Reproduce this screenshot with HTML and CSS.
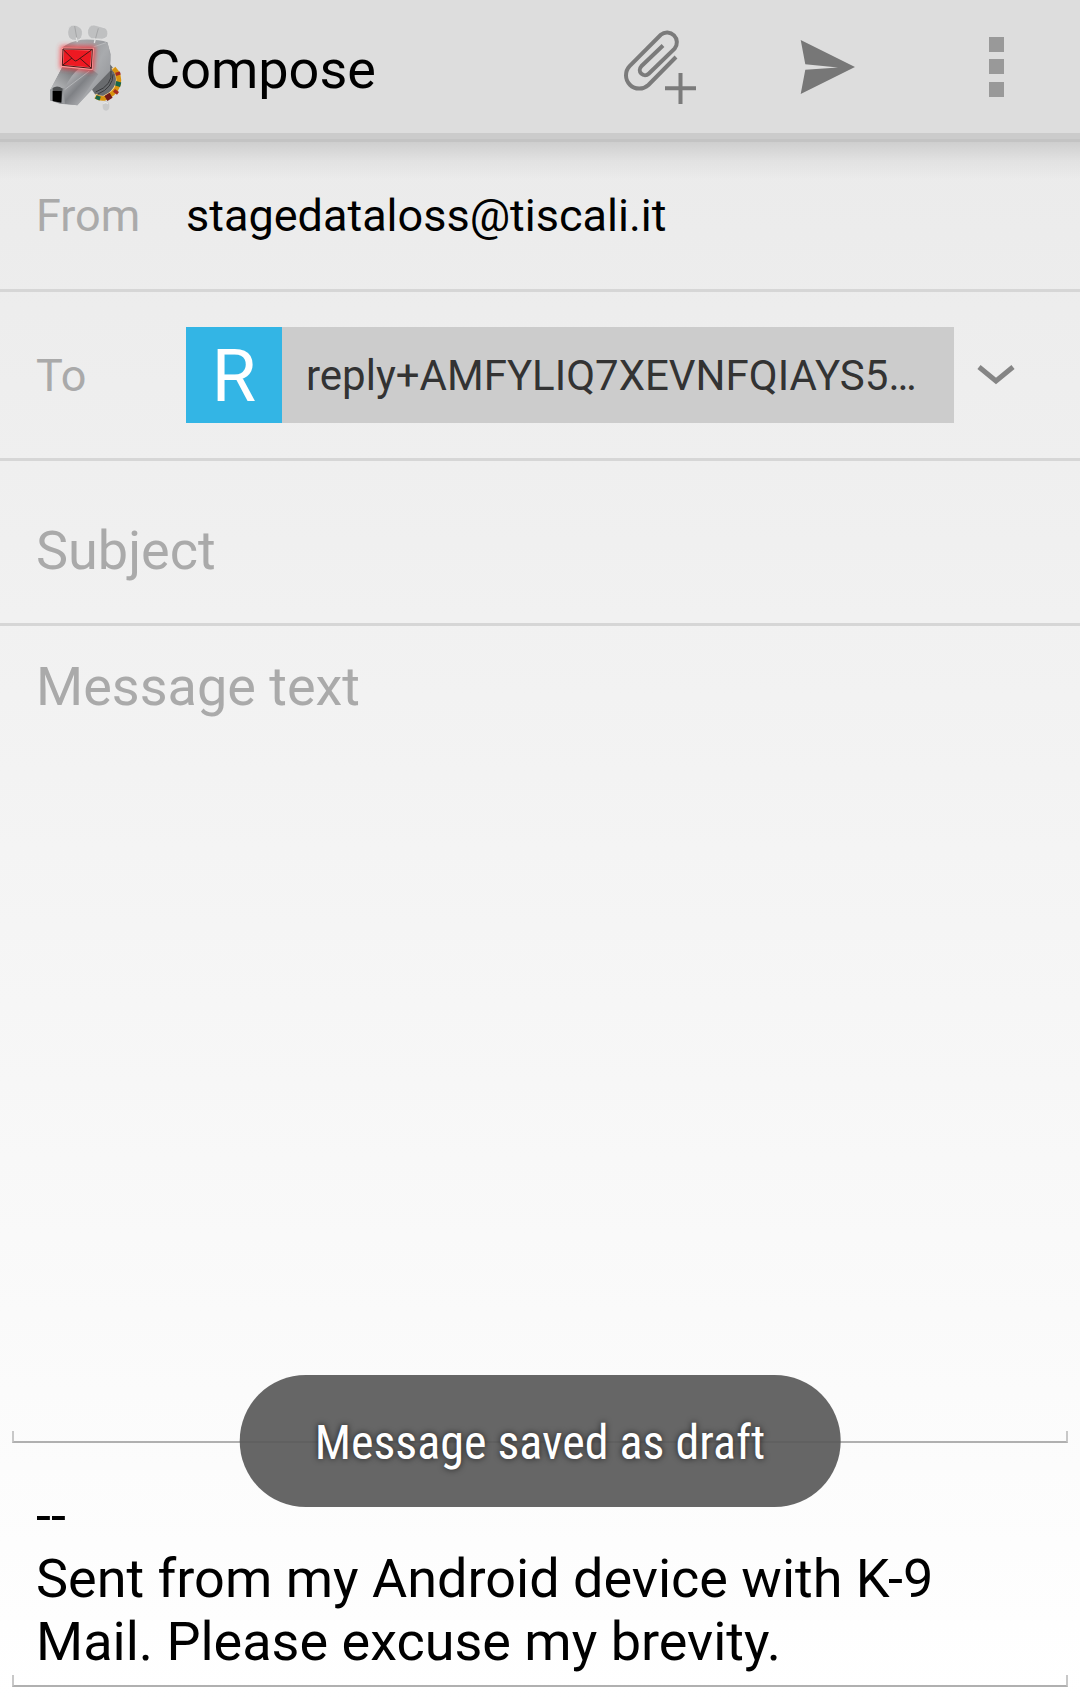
FILE: index.html
```html
<!DOCTYPE html>
<html lang="en">
<head>
<meta charset="utf-8">
<meta name="viewport" content="width=device-width, initial-scale=1">
<title>Compose</title>
<link rel="stylesheet" href="styles.css">
</head>
<body>
<header class="action-bar">
  <svg class="logo" viewBox="0 0 330 330" aria-hidden="true">
    <defs>
      <linearGradient id="side" x1="0" y1="0" x2="1" y2="1">
        <stop offset="0" stop-color="#8b8d90"/><stop offset=".5" stop-color="#a9abae"/><stop offset="1" stop-color="#8b8d91"/>
      </linearGradient>
      <linearGradient id="head" x1="0" y1="0" x2="1" y2="0">
        <stop offset="0" stop-color="#77797d"/><stop offset=".45" stop-color="#a8a9ac"/><stop offset="1" stop-color="#97999d"/>
      </linearGradient>
      <linearGradient id="jaw" x1="0" y1="0" x2="1" y2="1">
        <stop offset=".25" stop-color="#a9aaad"/><stop offset=".48" stop-color="#7f8185"/><stop offset=".8" stop-color="#b5b6b9"/>
      </linearGradient>
      <linearGradient id="snout" x1="1" y1="0" x2="0" y2="1">
        <stop offset=".2" stop-color="#77797c"/><stop offset="1" stop-color="#c2c3c5"/>
      </linearGradient>
      <filter id="glow" x="-40%" y="-40%" width="180%" height="180%"><feGaussianBlur stdDeviation="8"/></filter>
    </defs>
    <ellipse cx="228" cy="285" rx="10" ry="14" fill="#c9cacb"/>
    <path d="M220 278q6-6 14 0" fill="none" stroke="#e8e8e8" stroke-width="4"/>
    <path d="M232 150L250 172Q268 190 260 220Q250 248 222 258L198 254 186 236Z" fill="#696b6e"/>
    <path d="M243 180Q250 222 197 243M249 190Q249 230 204 249" fill="none" stroke="#38393b" stroke-width="3"/>
    <path d="M247 171Q266 190 260 218Q250 246 222 257Q207 259 196 251" fill="none" stroke="#f8d79b" stroke-width="7"/>
    <path d="M251 172Q272 192 265 222Q254 250 224 262Q208 264 197 256" fill="none" stroke="#d8930f" stroke-width="14"/>
    <path d="M257 190L271 186M252 238L264 247" stroke="#a52b20" stroke-width="10"/>
    <path d="M257 217L272 221M206 255L202 266" stroke="#18664a" stroke-width="14"/>
    <path d="M231 250L240 265" stroke="#701b19" stroke-width="18"/>
    <path d="M96 110Q120 91 155 86Q205 84 232 94L242 130Q243 170 230 185L142 283 90 278 60 268 61 238 99 164Z" fill="url(#head)"/>
    <path d="M190 107L232 94Q244 130 240 180L190 232 142 283 130 262 175 200 188 170Z" fill="url(#side)"/>
    <path d="M99 166L187 176 205 190 142 283 104 278 101 238Z" fill="url(#jaw)"/>
    <path d="M99 164L150 170Q123 190 105 230L60 238Z" fill="url(#snout)"/>
    <path d="M104 236L178 180M190 108L228 95" fill="none" stroke="#c4c5c7" stroke-width="2"/>
    <path d="M60 236Q80 220 101 237L104 278 60 268Z" fill="#9a9c9f"/>
    <path d="M68 231Q82 221 98 233L94 274 68 270Z" fill="#4f5153"/>
    <path d="M68 240L95 240 94 275 68 270Z" fill="#000"/>
    <path d="M92 104L196 106 191 182 90 172Z" fill="#ff3037" opacity=".8" filter="url(#glow)"/>
    <path d="M98 113L188 115 184 173 96 165Z" fill="#ed1922" stroke="#ff9a9a" stroke-width="7"/>
    <path d="M99 114L187 115 184 172 97 163ZM99 115L131 147Q137 153 143 147L187 115M97 163L126 141M184 172L150 142" fill="none" stroke="#4a1717" stroke-width="3"/>
    <g fill="#bfc0c1" stroke="#e5e5e5" stroke-width="2">
      <path d="M125 43Q139 39 151 50Q162 60 154 80Q146 91 127 87Q113 83 113 63Q114 47 125 43Z"/>
      <path d="M184 43Q191 40 204 45L226 51Q237 60 232 76Q224 87 209 84L185 83Q170 76 173 57Q176 47 184 43Z"/>
    </g>
    <path d="M134 45L142 91M205 52L193 96" fill="none" stroke="#a5a6a7" stroke-width="3"/>
    <path d="M139 80L142 93M196 82L193 96" stroke="#e4e4e4" stroke-width="4"/>
  </svg>
  <h1 class="title">Compose</h1>
  <div class="actions">
    <button class="action" type="button" aria-label="Add attachment">
      <svg class="action-icon" viewBox="612 18 96 96">
        <path class="clip" d="M676 57L648.4 85A13.3 13.3 0 0 1 629.6 66.2L660.8 34.8A9.8 9.8 0 0 1 674.6 48.6L648.7 73.7A5.2 5.2 0 0 1 641.3 66.3L663 45.5"/>
        <path class="clip" d="M665 88.3H696M680.5 73V104"/>
      </svg>
    </button>
    <button class="action" type="button" aria-label="Send">
      <svg class="action-icon" viewBox="780 18 96 96">
        <path fill="#777" d="M800.7 40L855 67 800.7 94 805.3 69.7 838 67.4 805.3 64.3Z"/>
      </svg>
    </button>
    <button class="action" type="button" aria-label="More options">
      <svg class="action-icon" viewBox="948 18 96 96">
        <path fill="#999" d="M989 37h15v15h-15zM989 59h15v15h-15zM989 82h15v15h-15z"/>
      </svg>
    </button>
  </div>
</header>

<main class="compose">
  <div class="row">
    <span class="label">From</span>
    <span class="from">stagedataloss@tiscali.it</span>
  </div>
  <div class="row row-to">
    <span class="label">To</span>
    <div class="chip">
      <span class="avatar">R</span>
      <span class="address">reply+AMFYLIQ7XEVNFQIAYS5…</span>
    </div>
    <button class="expand" type="button" aria-label="Show Cc and Bcc">
      <svg class="chevron" viewBox="0 0 42 24"><path d="M4 4L21 18 38 4"/></svg>
    </button>
  </div>
  <div class="row row-subject">
    <input class="field" type="text" placeholder="Subject" aria-label="Subject">
  </div>
  <textarea class="field message" placeholder="Message text" aria-label="Message text"></textarea>
  <div class="underline"></div>
  <textarea class="field signature" rows="3" aria-label="Signature">--
Sent from my Android device with K-9 Mail. Please excuse my brevity.</textarea>
  <div class="underline"></div>
</main>

<div class="toast" role="status">Message saved as draft</div>
</body>
</html>
```
FILE: styles.css
```css
* {
  box-sizing: border-box;
}

body {
  margin: 0;
  min-height: 100vh;
  display: flex;
  flex-direction: column;
  position: relative;
  background: linear-gradient(#e9e9e9, #fff);
  color: #000;
  font-family: Roboto, sans-serif;
}

button {
  border: 0;
  padding: 0;
  background: none;
}

.action-bar {
  display: flex;
  align-items: center;
  height: 142px;
  padding: 0 0 8px 30px;
  background: #ddd;
  border-bottom: 3px solid #c3c3c3;
  box-shadow: inset 0 -6px #cbcbcb;
}

.logo {
  width: 110px;
  height: 110px;
}

.title {
  margin: 8px 0 0 5px;
  font-size: 54px;
  line-height: 63px;
  font-weight: 400;
}

.actions {
  display: flex;
  margin-left: auto;
}

.action {
  width: 168px;
  height: 131px;
  display: flex;
  align-items: center;
  justify-content: center;
}

.action-icon {
  width: 96px;
  height: 96px;
}

.clip {
  fill: none;
  stroke: #7b7b7b;
  stroke-width: 4;
}

.compose {
  flex: 1;
  display: flex;
  flex-direction: column;
  padding-bottom: 12px;
  background: linear-gradient(rgba(0, 0, 0, .12), rgba(0, 0, 0, .04) 50%, rgba(0, 0, 0, 0)) top / 100% 38px no-repeat;
}

.row {
  display: flex;
  align-items: center;
  padding: 47px 36px;
  border-bottom: 3px solid #d6d6d6;
  font-size: 45px;
  line-height: 53px;
}

.label {
  width: 150px;
  color: #aaa;
}

.row-to {
  padding: 35px 0 35px 36px;
}

.chip {
  flex: 1;
  min-width: 0;
  display: flex;
  align-items: center;
  background: #ccc;
}

.avatar {
  width: 96px;
  height: 96px;
  padding-top: 2px;
  background: #33b5e5;
  color: #fff;
  font-size: 72px;
  line-height: 96px;
  text-align: center;
}

.address {
  flex: 1;
  min-width: 0;
  padding: 0 24px;
  color: #333;
  font-size: 42px;
  white-space: nowrap;
  overflow: hidden;
  text-overflow: ellipsis;
}

.expand {
  width: 126px;
  height: 96px;
  padding-left: 21px;
  display: flex;
  align-items: center;
}

.chevron {
  width: 42px;
  height: 24px;
  fill: none;
  stroke: #858585;
  stroke-width: 5;
}

.row-subject {
  padding: 58px 36px 41px;
}

.field {
  display: block;
  width: 100%;
  margin: 0;
  padding: 0;
  border: 0;
  outline: 0;
  background: none;
  color: #000;
  font: 54px/63px Roboto, sans-serif;
  height: 63px;
  resize: none;
  overflow: hidden;
}

.field::placeholder {
  color: #aaa;
  opacity: 1;
}

.message {
  flex: 1;
  min-height: 252px;
  padding: 29px 36px 0;
}

.signature {
  height: 232px;
  padding: 41px 36px 0;
}

.underline {
  height: 12px;
  margin: 0 12px;
  border: 2px solid #c8c8c8;
  border-top: 0;
  border-bottom-color: #b0b0b0;
}

.toast {
  position: absolute;
  bottom: 192px;
  left: 50%;
  transform: translateX(-50%);
  padding: 40px 75px 36px;
  border-radius: 66px;
  background: rgba(89, 89, 89, .92);
  color: #fff;
  font-family: "Roboto Condensed", Roboto, sans-serif;
  font-size: 48px;
  line-height: 56px;
  white-space: nowrap;
  text-shadow: 0 0 6px rgba(0, 0, 0, .7);
}
```
